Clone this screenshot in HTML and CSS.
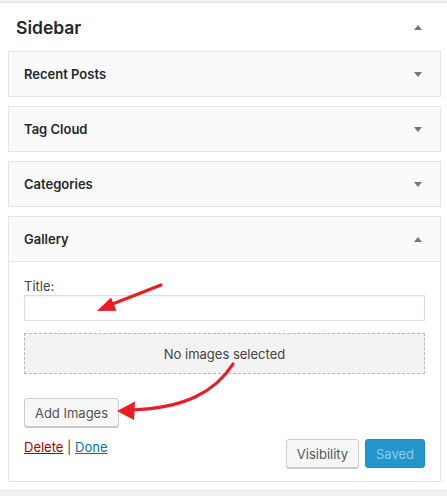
FILE: index.html
```html
<!DOCTYPE html>
<html>
<head>
<meta charset="utf-8">
<link rel="stylesheet" href="styles.css">
</head>
<body>
<div class="panel">
  <div class="panel-head">
    <h2 class="panel-title">Sidebar</h2>
    <span class="tri tri-up"></span>
  </div>
  <div class="widget">
    <div class="widget-head"><h3 class="widget-title">Recent Posts</h3><span class="tri tri-down"></span></div>
  </div>
  <div class="widget">
    <div class="widget-head"><h3 class="widget-title">Tag Cloud</h3><span class="tri tri-down"></span></div>
  </div>
  <div class="widget">
    <div class="widget-head"><h3 class="widget-title">Categories</h3><span class="tri tri-down"></span></div>
  </div>
  <div class="widget">
    <div class="widget-head"><h3 class="widget-title">Gallery</h3><span class="tri tri-up"></span></div>
    <div class="widget-body">
      <label class="field-label">Title:</label>
      <input class="field-input" type="text">
      <div class="dropzone">No images selected</div>
      <button class="btn btn-add">Add Images</button>
      <div class="footer">
        <div class="links"><a class="link-delete">Delete</a> | <a class="link-done">Done</a></div>
        <div class="actions">
          <button class="btn">Visibility</button>
          <button class="btn btn-primary">Saved</button>
        </div>
      </div>
    </div>
  </div>
</div>
<svg class="annot" width="447" height="496" viewBox="0 0 447 496">
  <line x1="161" y1="285" x2="110" y2="305" stroke="#ec1c24" stroke-width="3" stroke-linecap="round"/>
  <polygon points="97,311 111,297.5 116.5,310.7" fill="#ec1c24"/>
  <path d="M233,364 C 215,392 185,408 132,410" fill="none" stroke="#ec1c24" stroke-width="3.2" stroke-linecap="round"/>
  <polygon points="117,411 135,401.5 134,420" fill="#ec1c24"/>
</svg>
</body>
</html>
```
FILE: styles.css
```css
html, body {
  margin: 0;
  padding: 0;
}
body {
  background: #f1f1f1;
  width: 447px;
  height: 496px;
  position: relative;
  overflow: hidden;
  font-family: Inter, "Liberation Sans", sans-serif;
  color: #23282d;
  padding-top: 2px;
  box-sizing: border-box;
}
.panel {
  background: #fff;
  border-top: 1px solid #e5e5e5;
  border-bottom: 1px solid #e5e5e5;
  padding: 0 6px 8px 8px;
}
.panel-head {
  height: 48px;
  display: flex;
  align-items: center;
  justify-content: space-between;
  padding: 0 19px 0 8px;
}
.panel-title {
  margin: 0;
  font-size: 17.5px;
  font-weight: 600;
  color: #23282d;
}
.tri {
  width: 0;
  height: 0;
  border-left: 4px solid transparent;
  border-right: 4px solid transparent;
}
.tri-up {
  border-bottom: 5px solid #72777c;
}
.tri-down {
  border-top: 5px solid #72777c;
}
.widget {
  border: 1px solid #e5e5e5;
  margin-bottom: 9px;
  background: #fff;
}
.widget:last-child {
  margin-bottom: 0;
}
.widget-head {
  height: 44px;
  background: #fafafa;
  display: flex;
  align-items: center;
  justify-content: space-between;
  padding: 0 18px 0 15px;
}
.widget-title {
  margin: 0;
  font-size: 13px;
  font-weight: 600;
  color: #23282d;
}
.widget-body {
  border-top: 1px solid #e5e5e5;
  padding: 15px 15px 13px 15px;
  display: flex;
  flex-direction: column;
  align-items: flex-start;
}
.field-label {
  font-size: 13px;
  line-height: 18px;
  color: #444;
}
.field-input {
  box-sizing: border-box;
  width: 100%;
  height: 26px;
  margin: 0;
  border: 1px solid #ddd;
  box-shadow: inset 0 1px 2px rgba(0,0,0,0.05);
  background: #fff;
  outline: none;
}
.dropzone {
  box-sizing: border-box;
  width: 100%;
  height: 41px;
  margin-top: 12px;
  border: 1px dashed #b4b9be;
  background: #f3f3f3;
  display: flex;
  align-items: center;
  justify-content: center;
  font-size: 13px;
  color: #444;
}
.btn {
  box-sizing: border-box;
  height: 29px;
  padding: 0 10px;
  font-family: Inter, "Liberation Sans", sans-serif;
  font-size: 13px;
  color: #555;
  background: #f7f7f7;
  border: 1px solid #ccc;
  border-radius: 3px;
  box-shadow: 0 1px 0 #ccc;
}
.btn-add {
  margin-top: 24px;
  width: 95px;
  padding: 0;
}
.footer {
  width: 100%;
  margin-top: 12px;
  display: flex;
  justify-content: space-between;
  align-items: flex-start;
}
.links {
  font-size: 13px;
  line-height: 17px;
  color: #444;
}
.link-delete {
  color: #a00;
  text-decoration: underline;
}
.link-done {
  color: #0073aa;
  text-decoration: underline;
}
.actions {
  display: flex;
  gap: 6px;
}
.actions .btn {
  width: 73px;
  padding: 0;
}
.actions .btn-primary {
  width: 60px;
  background: #2596cb;
  border-color: #1f8cc0;
  box-shadow: none;
  color: #8fcae6;
}
.annot {
  position: absolute;
  left: 0;
  top: 0;
  pointer-events: none;
}
```
